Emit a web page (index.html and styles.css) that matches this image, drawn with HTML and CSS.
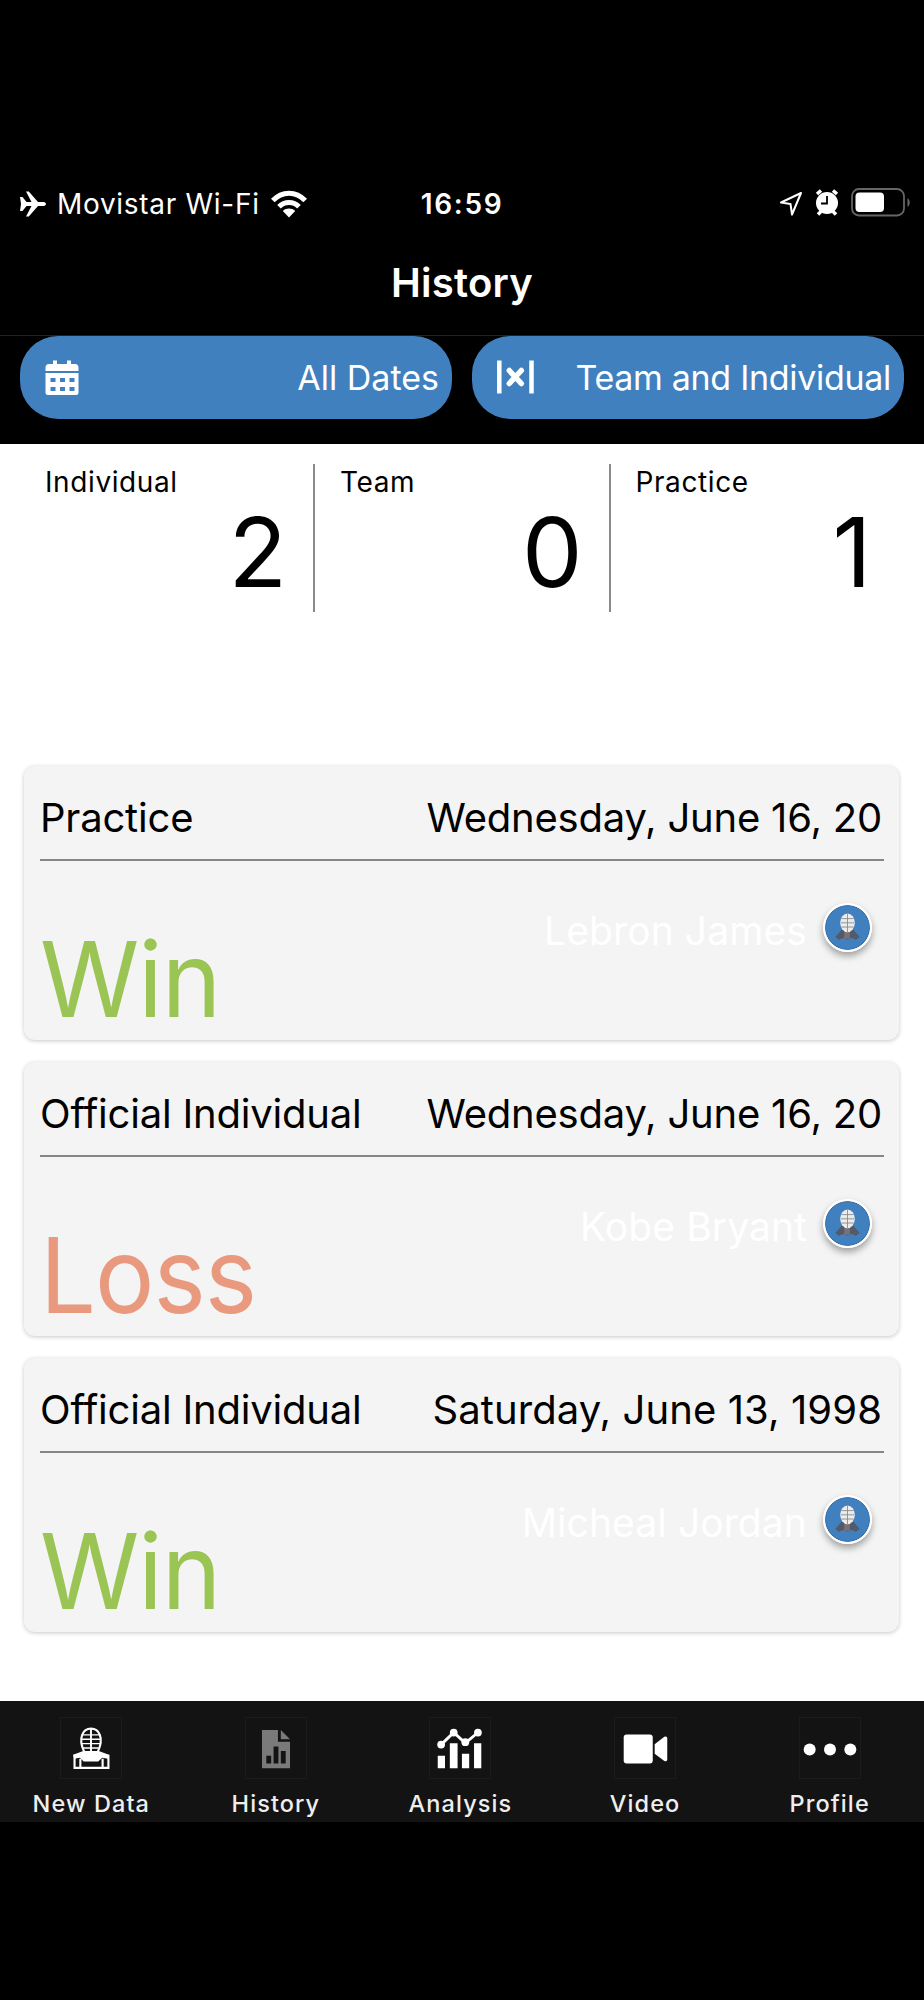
FILE: index.html
```html
<!DOCTYPE html>
<html lang="en-US">
<head>
<meta charset="utf-8">
<title>History</title>
<link rel="stylesheet" href="styles.css">
</head>

<body>

<!-- avatar shared by all the cards -->
<svg class="defs">
  <symbol id="avatar" viewBox="0 0 48 48">
    <circle cx="24" cy="24" r="23.500" fill="#4080bf" stroke="#2e62a0" stroke-width="1"/>
    <path d="M18 26h12l7 8-4 3-5-2-4 2-4-2-5 2-4-3z" fill="#545a66"/>
    <path d="M20.500 27h6v9h-6z" fill="#77727a"/>
    <ellipse cx="24" cy="19" rx="7.800" ry="10" fill="#eeeceb"/>
    <path d="M24 9v20M17.500 14.500h13M17 19h14M17.500 23.500h13" stroke="#8d8f98" stroke-width="1" fill="none"/>
  </symbol>
</svg>

<div class="status">
  <div class="carrier">
    <svg width="28" height="26" viewBox="0 0 28 26" fill="#fff"><path d="M1 6h2.500l4 5h5L7 0.500h2.800L19 11h5.500c3.300.3 3.300 3.700 0 4H19L9.800 25.500H7L12.500 15h-5l-4 5H1l1-7z"/></svg>
    <span class="carrier_name">Movistar Wi-Fi</span>
    <svg width="38" height="28" viewBox="0 0 38 28" fill="none" stroke="#fff" stroke-width="5"><path d="M2.800 10.500C12 .7 26 .7 35.200 10.500"/><path d="M9 16.700c5.600-5.600 14.400-5.600 20 0"/><path d="M12.800 21c3.600-3.200 8.800-3.200 12.400 0L19 27.500z" fill="#fff" stroke="none"/></svg>
  </div>
  <div class="time">16:59</div>
  <div class="indicators">
    <svg class="location" width="24" height="26" viewBox="0 0 24 26" fill="none" stroke="#fff" stroke-width="2" stroke-linejoin="round"><path d="M22 2L2 11.500l9.500 1.500L13 23.500z"/></svg>
    <svg width="24" height="27" viewBox="0 0 24 27"><circle cx="12" cy="14" r="11" fill="#fff"/><path d="M2 5l4-3.500M22 5l-4-3.500M3 25.500l3-3M21 25.500l-3-3" stroke="#fff" stroke-width="3.500"/><path d="M12 7v7.500H6" fill="none" stroke="#000" stroke-width="1.800"/></svg>
    <svg width="59" height="29" viewBox="0 0 59 29"><rect x="1" y="1" width="52" height="26.500" rx="7" fill="none" stroke="#666" stroke-width="1.800"/><rect x="4.500" y="4.500" width="28.500" height="19.500" rx="4" fill="#fff"/><path d="M56.500 10c3 2 3 7 0 9z" fill="#666"/></svg>
  </div>
</div>

<div class="nav">History</div>

<div class="filters">
  <div class="filter">
    <svg width="34" height="37" viewBox="0 0 34 37"><path d="M8 1.500h4V5h10V1.500h4V5h4q3.500 0 3.500 3.500V12H.5V8.500Q.5 5 4 5h4zM.5 14h33v19.500q0 2.500-2.500 2.500H3Q.5 36 .5 33.500z" fill="#fff"/><path d="M5.500 19h5v4h-5zm9.500 0h5v4h-5zm9.500 0h5v4h-5zM5.500 28h5v4h-5zm9.500 0h5v4h-5zm9.500 0h5v4h-5z" fill="#4080bf"/></svg>
    <span>All Dates</span>
  </div>
  <div class="filter">
    <svg width="38" height="34" viewBox="0 0 38 34" stroke="#fff" stroke-width="4.500"><path d="M2.300 .5v33M34.500 .5v33"/><path d="M12.300 10.500l12 13M24.300 10.500l-12 13" stroke-width="5.500" stroke-linecap="round"/></svg>
    <span class="kinds">Team and Individual</span>
  </div>
</div>

<div class="stats">
  <div class="stat"><span class="label">Individual</span><span class="count">2</span></div>
  <div class="stat"><span class="label">Team</span><span class="count">0</span></div>
  <div class="stat"><span class="label">Practice</span><span class="count">1</span></div>
</div>

<div class="list">
  <div class="card">
    <div class="head"><span>Practice</span><span class="date">Wednesday, June 16, 20</span></div>
    <div class="body">
      <div class="result win">Win</div>
      <div class="rival"><span>Lebron James</span><svg class="avatar"><use href="#avatar"/></svg></div>
    </div>
  </div>
  <div class="card">
    <div class="head"><span>Official Individual</span><span class="date">Wednesday, June 16, 20</span></div>
    <div class="body">
      <div class="result loss">Loss</div>
      <div class="rival"><span>Kobe Bryant</span><svg class="avatar"><use href="#avatar"/></svg></div>
    </div>
  </div>
  <div class="card">
    <div class="head"><span>Official Individual</span><span class="date full">Saturday, June 13, 1998</span></div>
    <div class="body">
      <div class="result win">Win</div>
      <div class="rival"><span>Micheal Jordan</span><svg class="avatar"><use href="#avatar"/></svg></div>
    </div>
  </div>
</div>

<div class="tabs">
  <div class="tab">
    <svg class="icon" viewBox="0 0 62 62"><g fill="none" stroke="#fff" stroke-width="2.200"><path d="M24 35c-7-15-1-24 7-24s14 9 7 24"/><path d="M31 11v24" stroke-width="2"/><path d="M22 17.500h18M20.500 22h21M21 26.500h20M23 31h16" stroke-width="1.400"/><path d="M14 38v13.500h35V38M20 42v10M43 42v10"/></g><path d="M23 34h16l10.500 4-1 4-6-1-4 4H23.500l-4-4-6 1-1-4z" fill="#fff"/></svg>
    <span>New Data</span>
  </div>
  <div class="tab">
    <svg class="icon" viewBox="0 0 62 62"><path d="M16.500 12.500H33V24.500h12.500v27.500h-29z" fill="#7a7a7a"/><path d="M36 12.500l9.500 9.500H36z" fill="#7a7a7a"/><path d="M21 39h5v8h-5zM28.500 29.500h5V47h-5zM36 34h5v13h-5z" fill="#131313"/></svg>
    <span>History</span>
  </div>
  <div class="tab">
    <svg class="icon" viewBox="0 0 62 62"><path d="M11.500 27.500L24.500 15 36.500 26l13-11" fill="none" stroke="#fff" stroke-width="3"/><g fill="#fff"><circle cx="11.500" cy="27.500" r="4"/><circle cx="24.500" cy="15" r="4"/><circle cx="36.500" cy="25" r="4"/><circle cx="49.500" cy="15" r="4"/><path d="M8 39h7.500v13H8zM20.500 26h8v26h-8zM33 37h7.500v15H33zM45.500 26H53v26h-7.500z"/></g></svg>
    <span>Analysis</span>
  </div>
  <div class="tab">
    <svg class="icon" viewBox="0 0 62 62" fill="#fff"><rect x="9" y="17" width="30" height="30" rx="3"/><path d="M41 27l10-7.500q3-1 3 1.500v22q0 2.500-3 1.500L41 37z"/></svg>
    <span>Video</span>
  </div>
  <div class="tab">
    <svg class="icon" viewBox="0 0 62 62" fill="#fff"><circle cx="10" cy="32.500" r="6.200"/><circle cx="31" cy="32.500" r="6.200"/><circle cx="52" cy="32.500" r="6.200"/></svg>
    <span>Profile</span>
  </div>
</div>

</body>
</html>
```
FILE: styles.css
```css
body {
    margin: 0;
    min-height: 2000px;
    font-family: Inter, "Liberation Sans", sans-serif;
    color: #000000;
    background-color: #000000;
}
.defs {
    display: none;
}
.status {
    display: grid;
    grid-template-columns: 1fr auto 1fr;
    align-items: center;
    height: 60px;
    padding: 174px 19px 0 19px;
    color: #ffffff;
    font-size: 28px;
}
.carrier, .indicators {
    display: flex;
    align-items: center;
}
.carrier_name {
    margin: 0 10px 0 10px;
    letter-spacing: 0.7px;
}
.time {
    font-weight: 600;
    letter-spacing: 1.7px;
}
.indicators {
    justify-content: flex-end;
    gap: 12px;
    margin: 0 -5px 3px 0;
}
.location {
    margin-top: 3px;
}
.nav {
    height: 97px;
    padding-bottom: 4px;
    border-bottom: 1px solid #222222;
    line-height: 97px;
    text-align: center;
    color: #ffffff;
    font-size: 40px;
    font-weight: 600;
    letter-spacing: 0.2px;
}
.filters {
    display: flex;
    gap: 20px;
    padding: 0 20px 25px;
}
.filter {
    display: flex;
    flex: 1;
    align-items: center;
    justify-content: space-between;
    box-sizing: border-box;
    height: 83px;
    padding: 0 13px 1px 25px;
    border-radius: 38px;
    color: #ffffff;
    background-color: #4080bf;
    font-size: 34px;
}
.kinds {
    letter-spacing: -0.3px;
}
.stats {
    display: grid;
    grid-template-columns: 295px 295.5px 295px;
    padding: 20px 18px 154px 20px;
    background-color: #ffffff;
}
.stat {
    display: flex;
    flex-direction: column;
    height: 148px;
    padding: 0 26px 0 25px;
    border-right: 2px solid #8a8a8a;
    box-sizing: border-box;
}
.stat:last-child {
    padding-right: 34px;
    border-right: none;
}
.label {
    line-height: 36px;
    font-size: 28px;
    letter-spacing: 0.6px;
}
.count {
    line-height: 104px;
    font-size: 96px;
    text-align: right;
}
.list {
    display: flex;
    flex-direction: column;
    gap: 22px;
    padding: 0 25px 69px 24px;
    background-color: #ffffff;
}
.card {
    height: 274px;
    padding: 0 15px 0 16px;
    border-radius: 11px;
    box-sizing: border-box;
    background-color: #f4f4f4;
    box-shadow: 0 1px 4px rgba(0, 0, 0, 0.22);
}
.head {
    display: flex;
    justify-content: space-between;
    height: 83px;
    padding-top: 10px;
    border-bottom: 2px solid #858585;
    line-height: 83px;
    font-size: 40px;
    letter-spacing: -0.2px;
    white-space: nowrap;
}
.date {
    padding-right: 2px;
}
.full {
    letter-spacing: 0.1px;
}
.body {
    display: flex;
    justify-content: space-between;
    height: 179px;
}
.result {
    padding-top: 63px;
    line-height: 110px;
    font-size: 105px;
    letter-spacing: -1px;
    transform: scaleX(0.943);
    transform-origin: left;
}
.win {
    color: #9ac454;
    transform: scaleX(0.96);
}
.loss {
    color: #e99a7e;
}
.rival {
    display: flex;
    gap: 16px;
    padding: 42px 12px 0 0;
    line-height: 56px;
    color: #ffffff;
    font-size: 39px;
    letter-spacing: 0.1px;
}
.avatar {
    width: 45px;
    height: 45px;
    border: 2px solid #ffffff;
    border-radius: 50%;
    box-shadow: 0 4px 7px rgba(0, 0, 0, 0.35);
}
.tabs {
    display: grid;
    grid-template-columns: repeat(5, 184.6px);
    height: 105px;
    padding-top: 16px;
    margin-left: -1px;
    color: #eeeeee;
    background-color: #131313;
    font-size: 23.5px;
    font-weight: 500;
    letter-spacing: 1.1px;
}
.tab {
    display: flex;
    flex-direction: column;
    align-items: center;
    gap: 10px;
    line-height: 29px;
}
.icon {
    width: 62px;
    height: 62px;
    box-sizing: border-box;
    border: 1px solid #1b1b1b;
}
```
